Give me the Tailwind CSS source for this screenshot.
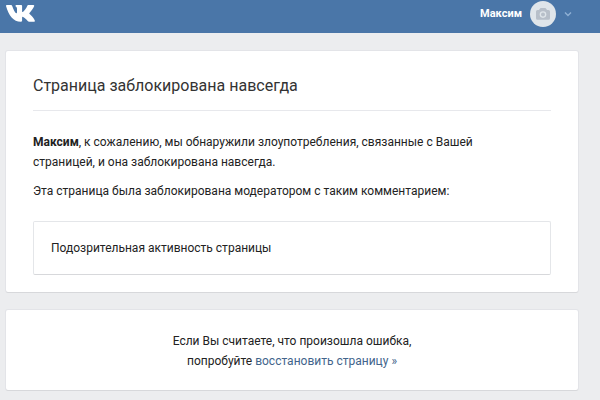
<!DOCTYPE html>
<html lang="ru">
<head>
  <meta charset="UTF-8" />
  <meta name="viewport" content="width=device-width, initial-scale=1.0" />
  <title>Страница заблокирована</title>
  <script src="https://cdn.jsdelivr.net/npm/@tailwindcss/browser@4"></script>
</head>
<body class="bg-[#ecedef] min-h-screen font-['Roboto',sans-serif] text-xs leading-5 text-[#222]">

  <header class="bg-[#4a76a8] h-[33px] pl-[6px] pr-7 pb-[6px] flex items-center justify-between">
    <a href="#" aria-label="VK" class="block">
      <svg class="w-[29px] h-[17px]" viewBox="0 0 29 17" fill="#fff">
        <path d="M.8 0h4.200q.9 0 1.200.9C7.400 4.600 9 7.600 10.200 8.200q.8.300.8-1V3.800C11 2.400 10.300 2 9.700 1.500 9.200 1 9.600 0 10.500 0h4.700q.9 0 .9 1v5.200q0 1.100.8.700C18.500 6 20.300 3.200 21.200 1.100 21.500.3 21.900 0 22.700 0h4.600q1.300 0 .8 1.300C27.300 3.400 25 6.200 23.500 7.900q-.5.600.1 1.200c1.600 1.500 4.200 3.900 5.100 6.200q.5 1.500-1 1.500h-4.500q-.9 0-1.500-.8c-1.300-1.700-3-3.500-4.600-4.100q-1-.3-1 .7v3q0 1.200-1.300 1.200C7.500 16.800 2.600 10.500.1 1.200-.1.400.1 0 .8 0z" />
      </svg>
    </a>
    <button type="button" class="flex items-center gap-2 text-white font-bold text-[11px]">
      <span>Максим</span>
      <svg class="size-[26px]" viewBox="0 0 26 26">
        <circle cx="13" cy="13" r="13" fill="#dfe5ea" />
        <path d="M7.500 9H9l1.200-1.700q.3-.4.800-.4h4q.5 0 .8.400L17 9h1.500q1.500 0 1.500 1.500v6.700q0 1.500-1.500 1.500h-11Q6 18.700 6 17.200v-6.700Q6 9 7.500 9z" fill="#b7bfc9" />
        <circle cx="13" cy="13.600" r="3.300" fill="#dfe5ea" />
        <circle cx="13" cy="13.600" r="2" fill="#b7bfc9" />
      </svg>
      <svg class="w-2 h-2" viewBox="0 0 8 8" fill="none" stroke="#8fb0d4" stroke-width="1.400">
        <path d="M1 2.500l3 3 3-3" />
      </svg>
    </button>
  </header>

  <main class="pt-[18px] pl-[6px] pr-[22px] flex flex-col gap-[18px]">
    <section class="bg-white rounded-[2px] shadow-[0_1px_0_0_#d7d8db,0_0_0_1px_#e3e4e8] px-[27px] pb-[17px]">
      <h1 class="text-base leading-5 text-[#333] pt-[25px] pb-[14px] border-b border-[#e7e8ec]">Страница заблокирована навсегда</h1>
      <p class="pt-[21px]"><b>Максим</b>, к сожалению, мы обнаружили злоупотребления, связанные с Вашей<br />страницей, и она заблокирована навсегда.</p>
      <p class="pt-[9px]">Эта страница была заблокирована модератором с таким комментарием:</p>
      <div class="mt-5 border border-[#e4e6e9] border-b-[#d7d8db] rounded-[2px] px-[17px] py-4">Подозрительная активность страницы</div>
    </section>

    <section class="bg-white rounded-[2px] shadow-[0_1px_0_0_#d7d8db,0_0_0_1px_#e3e4e8] pt-[21px] pb-[19px] text-center">
      Если Вы считаете, что произошла ошибка,<br />попробуйте <a href="#" class="text-[#42648b]">восстановить страницу »</a>
    </section>
  </main>

</body>
</html>
